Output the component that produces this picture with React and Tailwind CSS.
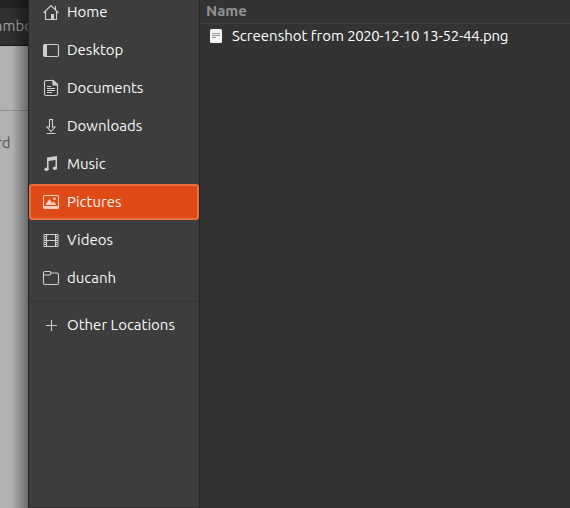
const iconProps = {
  width: 18,
  height: 18,
  viewBox: '0 0 18 18',
  fill: 'none',
  stroke: 'currentColor',
  strokeWidth: 1.1,
  className: 'shrink-0',
};

const HomeIcon = () => (
  <svg {...iconProps}>
    <path d="M1.500 10 9 2.500l7.500 7.500M3.500 8.500v8h11v-8M13.500 3v4" />
    <path d="M9 11h3v5.500H9z" fill="currentColor" stroke="none" />
  </svg>
);

const DesktopIcon = () => (
  <svg {...iconProps}>
    <rect x="1.500" y="3.500" width="15" height="12" rx="1.500" />
    <path d="M2 3.500h3v12H2z" fill="currentColor" stroke="none" />
  </svg>
);

const DocumentIcon = () => (
  <svg {...iconProps}>
    <path d="M4 1.500h7.500l4 4V15q0 1.500-1.500 1.500H4Q2.500 16.500 2.500 15V3Q2.500 1.500 4 1.500z" />
    <path d="M11 1.500v4.500h4.500z" fill="currentColor" />
    <path d="M5 7.500h4M5 9.500h8M5 11.500h8M5 13.500h5" />
  </svg>
);

const DownloadIcon = () => (
  <svg {...iconProps}>
    <path d="M7.500 2.500h3v7.500h2.500L9 14.500 5 10h2.500zM4.500 16.500h9" />
  </svg>
);

const MusicIcon = () => (
  <svg {...iconProps}>
    <path d="M5 2.500 15 1v12.500h-1.500V5L6.500 6v9H5z" fill="currentColor" stroke="none" />
    <ellipse cx="4.500" cy="14.300" rx="2.100" ry="1.700" fill="currentColor" stroke="none" />
    <ellipse cx="12.900" cy="13.300" rx="2.100" ry="1.700" fill="currentColor" stroke="none" />
  </svg>
);

const PictureIcon = () => (
  <svg {...iconProps}>
    <rect x="1.500" y="2.500" width="15" height="13" rx="1.500" />
    <path
      d="M1.500 13h15v2.500h-15zM4 12V10.500L7.500 6l2.500 4 1.500-1.500L14 11v1z"
      fill="currentColor"
      stroke="none"
    />
    <circle cx="12.500" cy="5.700" r="1.300" fill="currentColor" stroke="none" />
  </svg>
);

const VideoIcon = () => (
  <svg {...iconProps}>
    <path d="M4.500 3v13M13.500 3v13M4.500 3.500h9M4.500 9.500h9M4.500 15.500h9" />
    <path d="M2 3v13M16 3v13" strokeWidth="0.900" />
    <path d="M3.200 3v13M14.800 3v13" strokeWidth="2" strokeDasharray="1 1" />
  </svg>
);

const FolderIcon = () => (
  <svg {...iconProps}>
    <path d="M1.500 6V4q0-1.500 1.500-1.500h4.500q1.500 0 1.500 1.500h6q1.500 0 1.500 1.500V14q0 1.500-1.500 1.500H3Q1.500 15.500 1.500 14V6h5.500q1.500 0 2-2" />
  </svg>
);

const PlusIcon = () => (
  <svg {...iconProps}>
    <path d="M9.500 4v11M4 9.500h11" />
  </svg>
);

const places = [
  { name: 'Home', icon: HomeIcon },
  { name: 'Desktop', icon: DesktopIcon },
  { name: 'Documents', icon: DocumentIcon, tracking: 'tracking-[-0.1px]' },
  { name: 'Downloads', icon: DownloadIcon },
  { name: 'Music', icon: MusicIcon },
  { name: 'Pictures', icon: PictureIcon, active: true },
  { name: 'Videos', icon: VideoIcon },
  { name: 'ducanh', icon: FolderIcon },
];

function Place({ name, icon: Icon, tracking = '', active }) {
  return (
    <div
      className={`flex h-9 shrink-0 items-center gap-[7px] border-2 pl-[11px] ${
        active
          ? 'rounded-[3px] border-[#ea703f] bg-[#e04a17] text-[#fbd0c0]'
          : 'border-transparent text-[#cfcfcf]'
      }`}
    >
      <Icon />
      <span className={`whitespace-nowrap text-[15px] leading-5 text-[#f7f7f7] ${tracking}`}>{name}</span>
    </div>
  );
}

export default function App() {
  return (
    <div className="flex h-[508px] w-[570px] overflow-hidden bg-[#333333] font-['Ubuntu','Noto_Sans',sans-serif]">
      <div className="relative flex w-7 shrink-0 flex-col overflow-hidden bg-[#b1b1b1]">
        <div className="h-2 shrink-0 bg-[#242424]" />
        <div className="flex h-[38px] shrink-0 items-center justify-end border-b border-[#171717] bg-[#303030]">
          <span className="-mr-[5px] whitespace-nowrap text-[15px] text-[#a0a0a0]">ambo</span>
        </div>
        <div className="h-[65px] shrink-0 border-b border-[#929292]" />
        <span className="-ml-[4px] mt-[22px] text-[15px] leading-5 text-[#555555]">rd</span>
        <div className="absolute inset-y-0 right-0 w-4 bg-gradient-to-r from-transparent to-black/40" />
      </div>

      <nav className="flex w-[172px] shrink-0 flex-col border-x border-b border-x-[#242424] border-b-[#382f34] bg-[#3d3d3d]">
        <div className="-mt-[6px] flex flex-col gap-[2px]">
          {places.map((place) => (
            <Place key={place.name} {...place} />
          ))}
        </div>
        <div className="mb-[5px] mt-[5px] h-px shrink-0 bg-[#353535]" />
        <Place name="Other Locations" icon={PlusIcon} />
      </nav>

      <main className="flex min-w-0 flex-1 flex-col border-b border-[#382f34]">
        <div className="flex h-6 shrink-0 items-center border-b border-[#414141] pb-px pl-[6px]">
          <span className="text-[15px] font-bold leading-5 text-[#929292]">Name</span>
        </div>
        <div className="flex h-6 items-center pl-[9px]">
          <svg width="14" height="16" viewBox="0 0 14 16" className="mr-[9px] shrink-0">
            <rect x="1" y="1" width="12" height="14" rx="1.500" fill="#f5f3f5" />
            <path d="M3 5.500h8M3 7.500h8M3 9.500h4" stroke="#96929a" fill="none" />
          </svg>
          <span className="whitespace-nowrap text-[15px] leading-5 text-white">
            Screenshot from <span className="tracking-[-0.46px]">2020-12-10 </span>
            <span className="tracking-[-0.25px]">13-52-44.png</span>
          </span>
        </div>
      </main>
    </div>
  );
}
